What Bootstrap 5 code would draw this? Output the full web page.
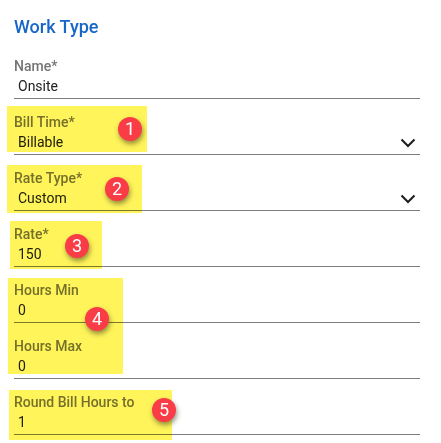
<!DOCTYPE html>
<html lang="en">
<head>
<meta charset="utf-8">
<title>Work Type</title>
<link href="https://cdn.jsdelivr.net/npm/bootstrap@5.3.0/dist/css/bootstrap.min.css" rel="stylesheet">
<style>
html, body { background: #fff; overflow: hidden; }
body { font-family: Roboto, "Liberation Sans", sans-serif; }
.sheet { position: relative; width: 441px; height: 443px; padding: 0 21px 0 14px; }
.form-title { font-size: 18px; font-weight: 500; line-height: 20px; color: #1667c9; padding-top: 17px; margin: 0 0 12px; }
.wt-field { height: 56px; display: flex; flex-direction: column; justify-content: flex-end; border-bottom: 1.5px solid #7d7d7d; }
.first-field { height: 50px; }
.wt-label { font-size: 14px; font-weight: 500; line-height: 16px; color: #757575; margin: 0 0 4px; }
.wt-value { font-size: 14px; line-height: 16px; color: #212121; padding: 0 4px 4px; }
.wt-chev { width: 16px; height: 10px; margin-right: 4px; margin-bottom: 6px; }
.hl { position: absolute; background: #fff45a; mix-blend-mode: multiply; }
.hl-1 { left: 7px; top: 106px; width: 140px; height: 46px; }
.hl-2 { left: 7px; top: 165px; width: 135px; height: 48px; }
.hl-3 { left: 10px; top: 221px; width: 92px; height: 48px; }
.hl-4 { left: 8px; top: 278px; width: 115px; height: 96px; }
.hl-5 { left: 9px; top: 390px; width: 163px; height: 50px; }
.pin { position: absolute; width: 24px; height: 24px; border-radius: 50%; background: #f93c46; color: #fff; font-size: 18px; line-height: 24px; text-align: center; box-shadow: 1px 3px 5px rgba(60,60,30,.55); }
.pin-1 { left: 118px; top: 117px; }
.pin-2 { left: 105px; top: 177px; }
.pin-3 { left: 65px; top: 234px; }
.pin-4 { left: 85px; top: 307px; }
.pin-5 { left: 152px; top: 398px; }
</style>
</head>
<body>
<div class="sheet">
  <h1 class="form-title">Work Type</h1>
  <form>
    <div class="wt-field first-field"><div class="wt-label">Name*</div><div class="wt-value">Onsite</div></div>
    <div class="wt-field"><div class="wt-label">Bill Time*</div><div class="d-flex justify-content-between align-items-end"><div class="wt-value">Billable</div><svg class="wt-chev" viewBox="0 0 16 10"><path d="M1.5 1.5 8 8l6.5-6.5" fill="none" stroke="#1c1c1c" stroke-width="2"/></svg></div></div>
    <div class="wt-field"><div class="wt-label">Rate Type*</div><div class="d-flex justify-content-between align-items-end"><div class="wt-value">Custom</div><svg class="wt-chev" viewBox="0 0 16 10"><path d="M1.5 1.5 8 8l6.5-6.5" fill="none" stroke="#1c1c1c" stroke-width="2"/></svg></div></div>
    <div class="wt-field"><div class="wt-label">Rate*</div><div class="wt-value">150</div></div>
    <div class="wt-field"><div class="wt-label">Hours Min</div><div class="wt-value">0</div></div>
    <div class="wt-field"><div class="wt-label">Hours Max</div><div class="wt-value">0</div></div>
    <div class="wt-field"><div class="wt-label">Round Bill Hours to</div><div class="wt-value">1</div></div>
  </form>
  <div class="hl hl-1"></div><div class="hl hl-2"></div><div class="hl hl-3"></div><div class="hl hl-4"></div><div class="hl hl-5"></div>
  <div class="pin pin-1">1</div><div class="pin pin-2">2</div><div class="pin pin-3">3</div><div class="pin pin-4">4</div><div class="pin pin-5">5</div>
</div>
<script src="https://cdn.jsdelivr.net/npm/bootstrap@5.3.0/dist/js/bootstrap.bundle.min.js"></script>
</body>
</html>
